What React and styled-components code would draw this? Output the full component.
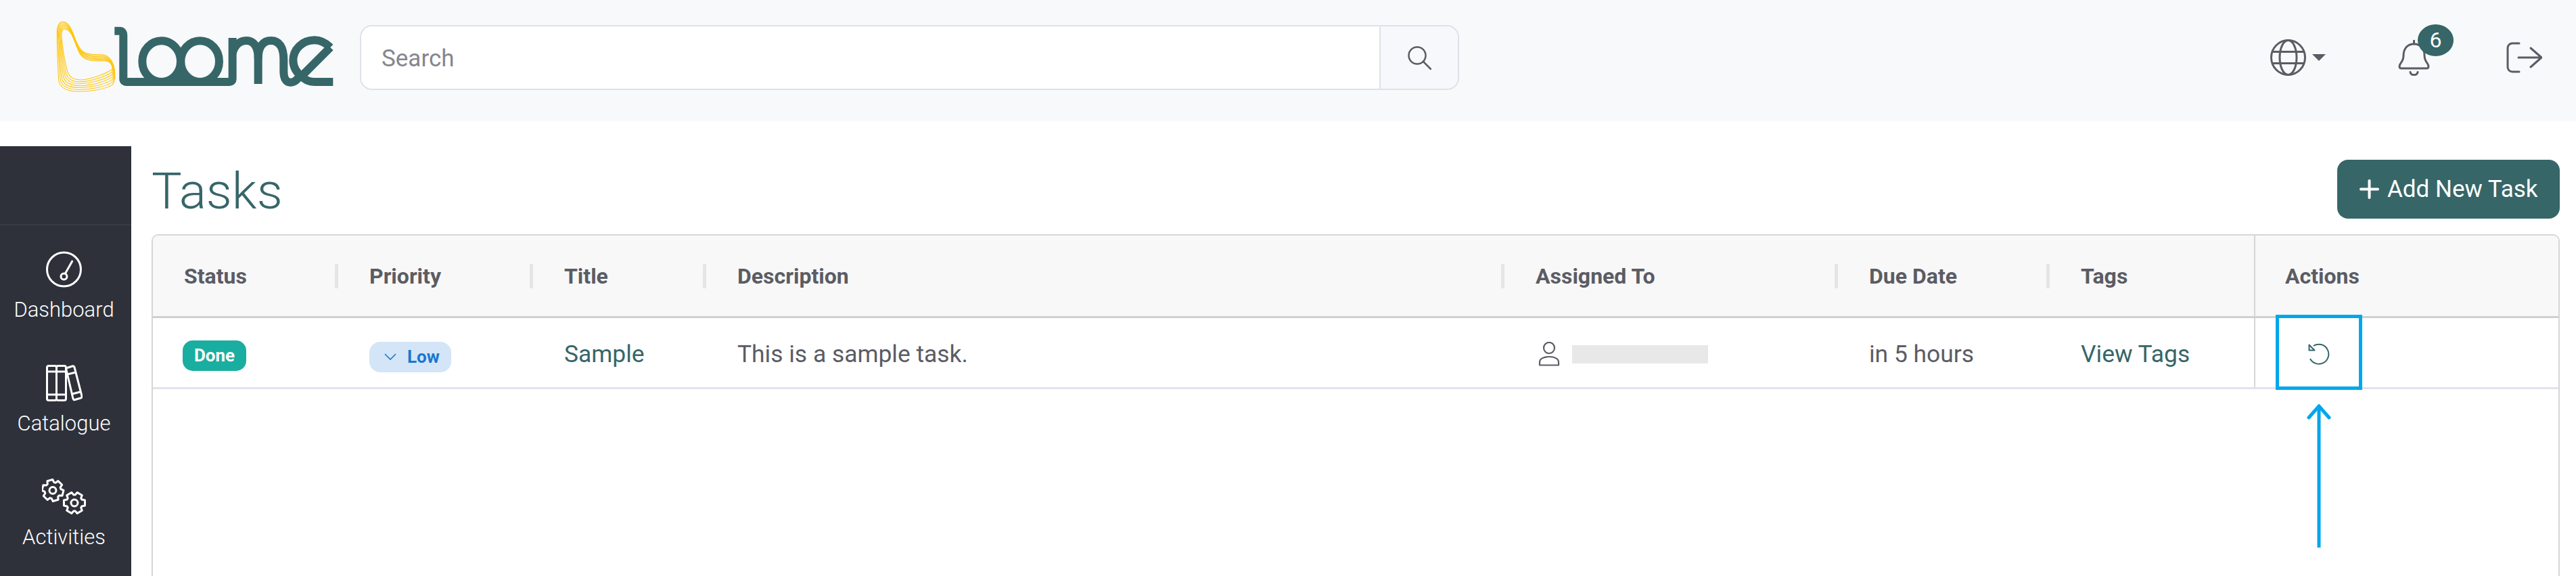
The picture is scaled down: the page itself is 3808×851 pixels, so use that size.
import styled, { createGlobalStyle } from "styled-components";

const TEAL = "#366668";
const GREY = "#5b5c64";
const BLUE = "#00a7ea";

const GlobalStyle = createGlobalStyle`
    html, body {
        margin: 0;
        height: 100%;
        background: white;
        overflow: hidden;
    }
    #root {
        height: 100%;
    }
    * {
        box-sizing: border-box;
    }
`;

// chair lines in the logo run between these two outlines
const CHAIR_OUTER = [40,12, 20,12,13,30,13,60, 13,120,17,220,20,270, 22,300,50,322,110,322, 170,322,230,310,258,292, 270,280,270,245,268,225, 262,185,240,160,215,158, 180,158,140,160,118,135, 100,115,90,75,78,50, 68,28,55,12,40,12];
const CHAIR_INNER = [45,45, 33,45,32,65,33,85, 38,130,50,200,60,235, 68,262,90,270,120,270, 160,268,225,245,255,225, 262,215,258,205,250,195, 240,185,225,185,205,185, 170,188,130,185,112,150, 100,125,88,90,78,70, 68,52,58,45,45,45];

function chairLine(t) {
    const p = CHAIR_OUTER.map((v, i) => (v + (CHAIR_INNER[i] - v) * t).toFixed(1));
    let d = `M${p[0]} ${p[1]}`;
    for (let i = 2; i < p.length; i += 6) {
        d += ` C${p.slice(i, i + 6).join(" ")}`;
    }
    return d + "Z";
}

function gearPath(cx, cy, outer, inner, rot) {
    const pts = [];
    for (let i = 0; i < 6; i++) {
        const a = rot + (i * Math.PI) / 3;
        const w = 0.26;
        [[inner, a - 0.52 + 0.1], [outer, a - w], [outer, a + w], [inner, a + 0.52 - 0.1]].forEach(([r, x]) => {
            pts.push(`${(cx + r * Math.cos(x)).toFixed(1)} ${(cy + r * Math.sin(x)).toFixed(1)}`);
        });
    }
    return "M" + pts.join(" L") + "Z";
}

function Logo() {
    return (
        <LogoSvg viewBox="0 0 1380 390" role="img" aria-label="Loome">
            <g transform="translate(60 24)" fill="none" stroke="#ffc60a" strokeWidth="3.2">
                {[0, 1, 2, 3, 4, 5, 6].map((i) => <path key={i} d={chairLine(i / 6)} />)}
            </g>
            <g fill="none" stroke={TEAL} strokeWidth="36">
                <path d="M328 77 H352 C362 77 367 85 367 97 V290 C367 298 373 303 382 303 H838 C846 303 851 298 851 290 V108" />
                <ellipse cx="536" cy="212" rx="85" ry="91" />
                <ellipse cx="707" cy="212" rx="85" ry="91" />
                <path d="M621.5 262 V300" />
                <path d="M851 175 C862 138 885 120 912 120 C948 120 965 148 965 200 V312" />
                <path d="M965 200 C965 148 985 120 1022 120 C1058 120 1078 148 1078 205 V255 C1078 290 1090 305 1108 305 C1125 305 1135 295 1150 278" />
                <path d="M1285 150 C1262 128 1238 118 1215 118 C1160 118 1120 160 1120 208 C1120 235 1132 262 1165 285 C1180 298 1195 303 1215 303 H1297" />
                <path d="M1285 150 L1150 285" />
            </g>
        </LogoSvg>
    );
}

function SearchIcon() {
    return (
        <svg width="35" height="35" viewBox="0 0 35 35" fill="none" stroke={GREY} strokeWidth="2.5" strokeLinecap="round">
            <circle cx="14" cy="14" r="12.5" />
            <path d="M23 23 L34 34" />
        </svg>
    );
}

function GlobeIcon() {
    return (
        <svg width="53" height="54" viewBox="0 0 53 54" fill="none" stroke={GREY} strokeWidth="3">
            <ellipse cx="26.5" cy="27" rx="25" ry="25.5" />
            <ellipse cx="26.5" cy="27" rx="12.5" ry="25.5" />
            <path d="M4 18.5 H49 M4 35.5 H49" />
        </svg>
    );
}

function BellIcon() {
    return (
        <svg width="47" height="53" viewBox="0 0 47 53" fill="none" stroke={GREY} strokeWidth="3" strokeLinecap="round">
            <path d="M23.5 1 V6" />
            <path d="M23.5 6 C13 6 8 14 8 23 C8 33 2 34 2 39 C2 41 3 42 5 42 H42 C44 42 45 41 45 39 C45 34 39 33 39 23 C39 14 34 6 23.5 6Z" />
            <path d="M18 47.5 C19 53 28 53 29 47.5" />
        </svg>
    );
}

function LogoutIcon() {
    return (
        <svg width="53" height="46" viewBox="0 0 53 46" fill="none" stroke={GREY} strokeWidth="3" strokeLinecap="round" strokeLinejoin="round">
            <path d="M19 2 H9 C5 2 2 5 2 9 V37 C2 41 5 44 9 44 H19" />
            <path d="M18 23 H51 M36 9 L52 23 L36 37" />
        </svg>
    );
}

function PlusIcon() {
    return (
        <svg width="29" height="29" viewBox="0 0 29 29" fill="none" stroke="white" strokeWidth="4" strokeLinecap="round">
            <path d="M14.5 2 V27 M2 14.5 H27" />
        </svg>
    );
}

function DashboardIcon() {
    return (
        <svg width="53" height="54" viewBox="0 0 53 54" fill="none" stroke="white" strokeWidth="3" strokeLinecap="round">
            <circle cx="26.5" cy="27" r="25" />
            <circle cx="26.5" cy="37.5" r="4.5" />
            <path d="M28.5 33 L38.7 15" />
        </svg>
    );
}

function BooksIcon() {
    return (
        <svg width="54" height="54" viewBox="0 0 54 54" fill="none" stroke="white" strokeWidth="3" strokeLinejoin="round">
            <rect x="1.5" y="1.5" width="14" height="51" rx="2.5" />
            <rect x="15.5" y="1.5" width="14" height="51" rx="2.5" />
            <path d="M1.5 10 H29.5 M1.5 44 H29.5" />
            <path d="M29.5 5 L39 2 C40.5 1.6 41.5 2.2 42 3.5 L53 46 C53.4 47.5 52.8 48.5 51.5 49 L43 51.5 C41.5 52 40.5 51.4 40 50 Z" />
            <path d="M32 14 L44 11 M39 43 L50.5 40" />
        </svg>
    );
}

function GearsIcon() {
    return (
        <svg width="66" height="54" viewBox="0 0 66 54" fill="none" stroke="white" strokeWidth="3" strokeLinejoin="round">
            <path d={gearPath(16, 17.5, 16, 12, 0.25)} />
            <circle cx="16" cy="17.5" r="5" />
            <path d={gearPath(48, 36, 16, 12, 0)} />
            <circle cx="48" cy="36" r="5" />
        </svg>
    );
}

function ChevronIcon() {
    return (
        <svg width="18" height="10" viewBox="0 0 18 10" fill="none" stroke="#1976d2" strokeWidth="1.6">
            <path d="M1 1 L9 9 L17 1" />
        </svg>
    );
}

function PersonIcon() {
    return (
        <svg width="32" height="36" viewBox="0 0 32 36" fill="none" stroke={GREY} strokeWidth="2.2" strokeLinejoin="round">
            <ellipse cx="16" cy="9" rx="8" ry="8" />
            <path d="M2 34.5 V30 C2 25 8 22 16 22 C24 22 30 25 30 30 V34.5 Z" />
        </svg>
    );
}

function ResetIcon() {
    return (
        <svg width="32" height="32" viewBox="0 0 32 32" fill="none" stroke={TEAL} strokeWidth="2">
            <path d="M3 23 A14.5 14.5 0 1 0 8 4" />
            <path d="M1.5 2.5 L1.5 10.5 L9.5 10.5 Z" strokeLinejoin="round" />
        </svg>
    );
}

export default function App() {
    const navItems = [
        { label: "Dashboard", icon: <DashboardIcon /> },
        { label: "Catalogue", icon: <BooksIcon /> },
        { label: "Activities", icon: <GearsIcon /> },
    ];
    const columns = ["Status", "Priority", "Title", "Description", "Assigned To", "Due Date", "Tags"];

    return (
        <Page>
            <GlobalStyle />
            <TopBar>
                <Logo />
                <SearchBox>
                    <SearchInput placeholder="Search" />
                    <SearchButton><SearchIcon /></SearchButton>
                </SearchBox>
                <TopActions>
                    <LanguagePicker>
                        <GlobeIcon />
                        <Caret />
                    </LanguagePicker>
                    <BellWrap>
                        <BellIcon />
                        <BellCount>6</BellCount>
                    </BellWrap>
                    <LogoutWrap><LogoutIcon /></LogoutWrap>
                </TopActions>
            </TopBar>
            <Body>
                <Sidebar>
                    <SidebarTop />
                    {navItems.map((item) => (
                        <NavItem key={item.label}>
                            <NavIcon>{item.icon}</NavIcon>
                            <NavLabel>{item.label}</NavLabel>
                        </NavItem>
                    ))}
                </Sidebar>
                <Main>
                    <TitleRow>
                        <Title>Tasks</Title>
                        <AddButton><PlusIcon />Add New Task</AddButton>
                    </TitleRow>
                    <Table>
                        <HeaderRow>
                            {columns.map((col) => (
                                <HeaderCell key={col}>
                                    {col}
                                    {col !== "Tags" && <ColumnRule />}
                                </HeaderCell>
                            ))}
                            <ActionsHeader>Actions</ActionsHeader>
                        </HeaderRow>
                        <Row>
                            <Cell><StatusPill>Done</StatusPill></Cell>
                            <Cell>
                                <PriorityPill><ChevronIcon />Low</PriorityPill>
                            </Cell>
                            <Cell $link>Sample</Cell>
                            <Cell>This is a sample task.</Cell>
                            <AssigneeCell>
                                <PersonIcon />
                                <RedactedName />
                            </AssigneeCell>
                            <Cell>in 5 hours</Cell>
                            <Cell $link>View Tags</Cell>
                            <ActionsCell>
                                <ResetIcon />
                                <Highlight />
                                <CalloutArrow viewBox="0 0 36 214" fill="none" stroke={BLUE}>
                                    <path d="M18 2 V212" strokeWidth="5" />
                                    <path d="M3 20 L18 3 L33 20" strokeWidth="5" strokeLinecap="round" />
                                </CalloutArrow>
                            </ActionsCell>
                        </Row>
                    </Table>
                </Main>
            </Body>
        </Page>
    );
}

const Page = styled.div`
    display: flex;
    flex-direction: column;
    height: 100%;
    font-family: Roboto, "Liberation Sans", sans-serif;
    color: ${GREY};
`;

const TopBar = styled.header`
    display: flex;
    align-items: center;
    flex: none;
    height: 179px;
    padding: 0 50px 9px 60px;
    background: #f8f9fb;
`;

const LogoSvg = styled.svg`
    flex: none;
    width: 460px;
    height: 130px;
`;

const SearchBox = styled.div`
    display: flex;
    width: 1625px;
    height: 96px;
    margin-left: 12px;
    border: 2px solid #dfe1e8;
    border-radius: 18px;
    overflow: hidden;
`;

const SearchInput = styled.input`
    flex: 1;
    min-width: 0;
    padding: 2px 30px 0;
    border: none;
    outline: none;
    background: white;
    font-family: inherit;
    font-size: 35px;
    color: ${GREY};

    &::placeholder {
        color: #85868e;
        opacity: 1;
    }
`;

const SearchButton = styled.div`
    display: flex;
    align-items: center;
    justify-content: center;
    flex: none;
    width: 116px;
    border-left: 2px solid #dfe1e8;
    background: #f7f8fb;
`;

const TopActions = styled.div`
    display: flex;
    align-items: center;
    gap: 107px;
    margin-left: auto;
`;

const LanguagePicker = styled.div`
    display: flex;
    align-items: center;
    gap: 9px;
`;

const Caret = styled.span`
    width: 0;
    height: 0;
    border-left: 10px solid transparent;
    border-right: 10px solid transparent;
    border-top: 10px solid ${GREY};
`;

const BellWrap = styled.div`
    position: relative;
    display: flex;
`;

const BellCount = styled.span`
    position: absolute;
    top: -23px;
    left: 29px;
    display: flex;
    align-items: center;
    justify-content: center;
    width: 53px;
    height: 47px;
    border-radius: 50%;
    background: ${TEAL};
    color: white;
    font-size: 32px;
`;

const LogoutWrap = styled.div`
    display: flex;
    margin-left: 6px;
`;

const Body = styled.div`
    display: flex;
    flex: 1;
    min-height: 0;
`;

const Sidebar = styled.nav`
    flex: none;
    width: 194px;
    margin-top: 37px;
    background: #2e313a;
    color: white;
    overflow: hidden;
`;

const SidebarTop = styled.div`
    height: 117px;
    margin-bottom: 38px;
    border-bottom: 2px solid #383b44;
`;

const NavItem = styled.div`
    display: flex;
    flex-direction: column;
    align-items: center;
    height: 168px;
    padding-right: 5px;
`;

const NavIcon = styled.div`
    display: flex;
    justify-content: center;
    height: 54px;
`;

const NavLabel = styled.span`
    margin-top: 13px;
    font-size: 31px;
    font-weight: 300;
    line-height: 40px;
`;

const Main = styled.main`
    flex: 1;
    min-width: 0;
    padding: 57px 24px 0 30px;
    overflow: hidden;
`;

const TitleRow = styled.div`
    display: flex;
    align-items: center;
    justify-content: space-between;
    height: 87px;
    margin-bottom: 23px;
`;

const Title = styled.h1`
    margin: 6px 0 0;
    font-size: 75px;
    font-weight: 300;
    line-height: 1;
    color: ${TEAL};
`;

const AddButton = styled.button`
    display: flex;
    align-items: center;
    gap: 12px;
    height: 87px;
    width: 329px;
    padding: 0 0 0 33px;
    border: none;
    border-radius: 16px;
    background: ${TEAL};
    color: white;
    font-family: inherit;
    font-size: 35px;
`;

const Table = styled.div`
    height: 600px;
    border: 2.5px solid #d6d6d6;
    border-radius: 10px;
    overflow: hidden;
`;

const COLUMNS = "274px 288px 256px 1180px 493px 313px 302px 1fr";

const HeaderRow = styled.div`
    display: grid;
    grid-template-columns: ${COLUMNS};
    height: 122px;
    border-bottom: 3px solid #d0d0d0;
    background: #f8f8f8;
`;

const HeaderCell = styled.div`
    display: flex;
    align-items: center;
    justify-content: space-between;
    padding-left: 46px;
    font-size: 32px;
    font-weight: 700;
`;

const ColumnRule = styled.span`
    width: 5px;
    height: 36px;
    background: #e4e5e5;
`;

const ActionsHeader = styled(HeaderCell)`
    padding-left: 44px;
    border-left: 2px solid #d6d6d6;
`;

const Row = styled.div`
    display: grid;
    grid-template-columns: ${COLUMNS};
    height: 105px;
    border-bottom: 3px solid #e0e3ec;
`;

const Cell = styled.div`
    display: flex;
    align-items: center;
    padding: 4px 0 0 46px;
    font-size: 35.4px;
    color: ${(props) => (props.$link ? TEAL : GREY)};
`;

const AssigneeCell = styled(Cell)`
    gap: 18px;
    padding-left: 50px;
`;

const RedactedName = styled.span`
    width: 201px;
    height: 27px;
    background: #e8e8e8;
`;

const ActionsCell = styled(Cell)`
    position: relative;
    justify-content: flex-start;
    padding-left: 78px;
    border-left: 2px solid #d6d6d6;
`;

const StatusPill = styled.span`
    display: flex;
    align-items: center;
    justify-content: center;
    width: 94px;
    height: 45px;
    margin: 4px 0 0 -2px;
    border-radius: 15px;
    background: #1aaea0;
    color: white;
    font-size: 26px;
    font-weight: 700;
`;

const PriorityPill = styled.span`
    display: flex;
    align-items: center;
    gap: 16px;
    width: 121px;
    height: 45px;
    margin-top: 8px;
    padding-left: 22px;
    border-radius: 16px;
    background: #d3e5f6;
    color: #1976d2;
    font-size: 26px;
    font-weight: 700;
`;

const Highlight = styled.span`
    position: absolute;
    top: -5px;
    left: 30px;
    width: 128px;
    height: 111px;
    border: 5px solid ${BLUE};
`;

const CalloutArrow = styled.svg`
    position: absolute;
    top: 127px;
    left: 76px;
    width: 36px;
    height: 214px;
`;
